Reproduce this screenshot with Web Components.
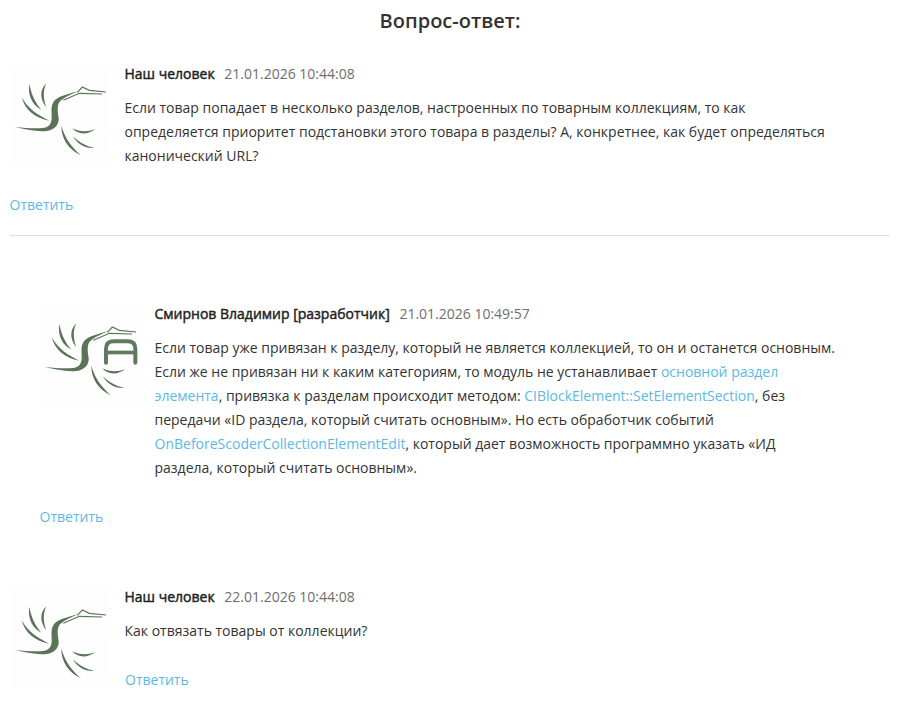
<!DOCTYPE html>
<html lang="ru">
<head>
<meta charset="utf-8">
<title>Вопрос-ответ</title>
<style>
  html, body { margin: 0; background: #fff; }
  body { font-family: "Open Sans", sans-serif; font-size: 14px; line-height: 24px; color: #333; }
  a { color: #5bb9e6; text-decoration: none; }
</style>
</head>
<body>
<qa-section heading="Вопрос-ответ:">
  <qa-comment name="Наш человек" date="21.01.2026 10:44:08" divider>
    Если товар попадает в несколько разделов, настроенных по товарным коллекциям, то как определяется приоритет подстановки этого товара в разделы? А, конкретнее, как будет определяться канонический URL?
  </qa-comment>
  <qa-comment name="Смирнов Владимир [разработчик]" date="21.01.2026 10:49:57" badge answer>
    Если товар уже привязан к разделу, который не является коллекцией, то он и останется основным. Если же не привязан ни к каким категориям, то модуль не устанавливает <a href="#">основной раздел элемента</a>, привязка к разделам происходит методом: <a href="#">CIBlockElement::SetElementSection</a>, без передачи «ID раздела, который считать основным». Но есть обработчик событий <a href="#">OnBeforeScoderCollectionElementEdit</a>, который дает возможность программно указать «ИД раздела, который считать основным».
  </qa-comment>
  <qa-comment name="Наш человек" date="22.01.2026 10:44:08">
    Как отвязать товары от коллекции?
  </qa-comment>
</qa-section>

<script>
class QaAvatar extends HTMLElement {
  constructor() {
    super();
    this.attachShadow({ mode: "open" });
  }

  connectedCallback() {
    // letter A only on the developer's picture
    const letter = this.hasAttribute("badge")
      ? `<path d="M228 188v-42q0-22 24-22h40q24 0 24 22v42" fill="none" stroke="#5f7a5c" stroke-width="12" stroke-linecap="round"/>
         <rect x="228" y="152" width="88" height="11" fill="#5f7a5c"/>`
      : "";
    this.shadowRoot.innerHTML = `
      <style>
        :host { display: block; width: 100px; height: 100px; background: #fefefe; }
        svg { display: block; }
      </style>
      <svg width="100" height="100" viewBox="30 15 300 300" fill="#5a7457">
        <!-- body and neck -->
        <path d="M45 201C75 204 105 206 128 204C146 202 154 192 155 176C156 156 150 138 164 121C176 108 205 102 236 92C206 106 190 114 180 124C170 136 173 156 176 174C178 195 162 210 140 213C110 216 75 208 45 201Z"/>
        <!-- head and beak -->
        <path d="M232 97L247 81L268 91L318 96M190 121L238 100L306 102" fill="none" stroke="#5a7457" stroke-width="3.5"/>
        <!-- upper feathers -->
        <path d="M88 71C82 106 98 136 124 149C108 130 94 106 88 71Z"/>
        <path d="M139 70C119 88 119 118 139 142C130 118 128 92 139 70Z"/>
        <path d="M65 112C74 148 106 176 148 182C114 166 86 148 65 112Z"/>
        <!-- lower feathers -->
        <path d="M184 197C184 238 206 268 243 286C216 262 196 238 184 197Z"/>
        <path d="M217 205C232 224 262 226 286 208C262 216 238 216 217 205Z"/>
        <path d="M219 229C230 252 256 266 283 264C258 258 238 248 219 229Z"/>
        ${letter}
      </svg>`;
  }
}

class QaComment extends HTMLElement {
  constructor() {
    super();
    this.attachShadow({ mode: "open" });
  }

  connectedCallback() {
    const badge = this.hasAttribute("badge") ? "badge" : "";
    this.shadowRoot.innerHTML = `
      <style>
        :host { display: block; }
        :host([answer]) { margin: 66px 0 0 30px; }
        :host([divider]) .reply { padding-bottom: 18px; border-bottom: 1px solid #ddd; }
        .clearfix::after { content: ""; display: block; clear: both; }
        qa-avatar { float: left; margin: 3px 14.5px 0 0; }
        .head { display: flow-root; }
        .name { font-weight: 400; -webkit-text-stroke: 0.45px #222; color: #222; margin-right: 6px; }
        .date { color: #6e6e6e; }
        .text { display: flow-root; margin-top: 10px; padding-right: 54px; }
        .reply { margin-top: 25px; }
        .reply a { margin-left: -0.5px; color: #5bb9e6; text-decoration: none; }
        :host(:last-child) .reply a { margin-left: 0.5px; }
      </style>
      <div class="clearfix">
        <qa-avatar ${badge}></qa-avatar>
        <div class="head"><span class="name">${this.getAttribute("name")}</span> <span class="date">${this.getAttribute("date")}</span></div>
        <div class="text"><slot></slot></div>
        <div class="reply"><a href="#">Ответить</a></div>
      </div>`;
  }
}

class QaSection extends HTMLElement {
  constructor() {
    super();
    this.attachShadow({ mode: "open" });
  }

  connectedCallback() {
    this.shadowRoot.innerHTML = `
      <style>
        :host { display: block; padding: 0 11px 0 10px; }
        h2 { margin: 0 0 28px; padding-top: 8px; font-size: 20px; line-height: 26px; font-weight: 600; text-align: center; color: #333; }
        .list { display: flow-root; }
        ::slotted(qa-comment:last-child) { margin-top: 56px; }
      </style>
      <h2>${this.getAttribute("heading")}</h2>
      <div class="list"><slot></slot></div>`;
  }
}

customElements.define("qa-avatar", QaAvatar);
customElements.define("qa-comment", QaComment);
customElements.define("qa-section", QaSection);
</script>
</body>
</html>
